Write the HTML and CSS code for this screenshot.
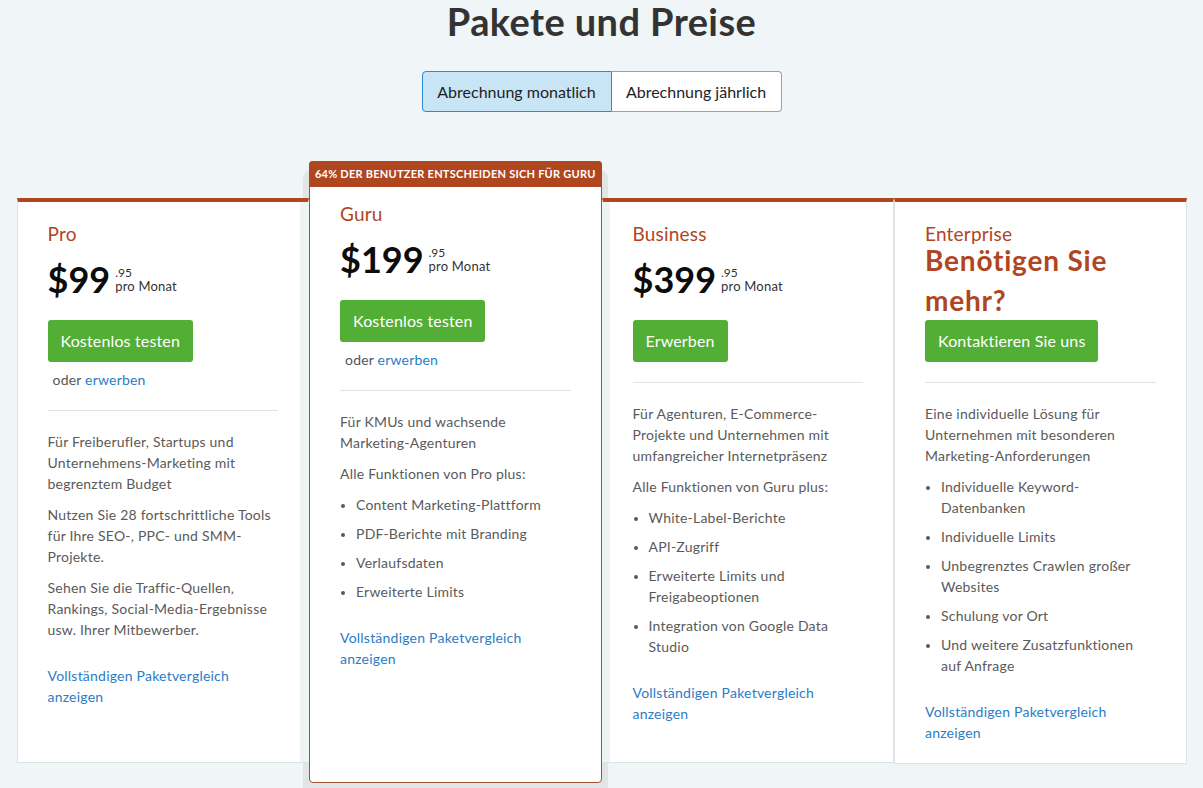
FILE: index.html
```html
<!DOCTYPE html>
<html lang="de">
<head>
<meta charset="utf-8">
<title>Pakete und Preise</title>
<link rel="stylesheet" href="styles.css">
</head>
<body>
<main class="page">
  <h1 class="page-title">Pakete und Preise</h1>
  <div class="billing">
    <button class="billing-btn is-active">Abrechnung monatlich</button>
    <button class="billing-btn">Abrechnung jährlich</button>
  </div>

  <section class="plans">
    <article class="plan plan-before">
      <h2 class="plan-name">Pro</h2>
      <div class="price"><span class="price-main">$99</span><span class="price-side"><span class="cents">.95</span><span class="period">pro Monat</span></span></div>
      <a class="cta" href="#">Kostenlos testen</a>
      <p class="alt">oder <a href="#">erwerben</a></p>
      <hr class="sep">
      <div class="desc">
        <p>Für Freiberufler, Startups und Unternehmens-Marketing mit begrenztem Budget</p>
        <p>Nutzen Sie 28 fortschrittliche Tools für Ihre SEO-, PPC- und SMM-Projekte.</p>
        <p>Sehen Sie die Traffic-Quellen, Rankings, Social-Media-Ergebnisse usw. Ihrer Mitbewerber.</p>
      </div>
      <a class="compare" href="#">Vollständigen Paketvergleich<br>anzeigen</a>
    </article>

    <article class="plan plan-featured">
      <div class="badge">64% der Benutzer entscheiden sich für Guru</div>
      <div class="plan-body">
        <h2 class="plan-name">Guru</h2>
        <div class="price"><span class="price-main">$199</span><span class="price-side"><span class="cents">.95</span><span class="period">pro Monat</span></span></div>
        <a class="cta" href="#">Kostenlos testen</a>
        <p class="alt">oder <a href="#">erwerben</a></p>
        <hr class="sep">
        <div class="desc">
          <p>Für KMUs und wachsende Marketing-Agenturen</p>
          <p>Alle Funktionen von Pro plus:</p>
          <ul>
            <li>Content Marketing-Plattform</li>
            <li>PDF-Berichte mit Branding</li>
            <li>Verlaufsdaten</li>
            <li>Erweiterte Limits</li>
          </ul>
        </div>
        <a class="compare" href="#">Vollständigen Paketvergleich<br>anzeigen</a>
      </div>
    </article>

    <article class="plan plan-after">
      <h2 class="plan-name">Business</h2>
      <div class="price"><span class="price-main">$399</span><span class="price-side"><span class="cents">.95</span><span class="period">pro Monat</span></span></div>
      <a class="cta" href="#">Erwerben</a>
      <hr class="sep">
      <div class="desc">
        <p>Für Agenturen, E-Commerce-Projekte und Unternehmen mit umfangreicher Internetpräsenz</p>
        <p>Alle Funktionen von Guru plus:</p>
        <ul>
          <li>White-Label-Berichte</li>
          <li>API-Zugriff</li>
          <li>Erweiterte Limits und Freigabeoptionen</li>
          <li>Integration von Google Data Studio</li>
        </ul>
      </div>
      <a class="compare" href="#">Vollständigen Paketvergleich<br>anzeigen</a>
    </article>

    <article class="plan">
      <h2 class="plan-name">Enterprise</h2>
      <h3 class="plan-pitch">Benötigen Sie mehr?</h3>
      <a class="cta" href="#">Kontaktieren Sie uns</a>
      <hr class="sep">
      <div class="desc">
        <p>Eine individuelle Lösung für Unternehmen mit besonderen Marketing-Anforderungen</p>
        <ul>
          <li>Individuelle Keyword-Datenbanken</li>
          <li>Individuelle Limits</li>
          <li>Unbegrenztes Crawlen großer Websites</li>
          <li>Schulung vor Ort</li>
          <li>Und weitere Zusatzfunktionen auf Anfrage</li>
        </ul>
      </div>
      <a class="compare" href="#">Vollständigen Paketvergleich<br>anzeigen</a>
    </article>
  </section>
</main>
</body>
</html>
```

FILE: styles.css
```css
* { box-sizing: border-box; }

html, body {
  margin: 0;
  padding: 0;
  background: #f0f5f8;
}

body {
  font-family: Lato, "Open Sans", "Liberation Sans", sans-serif;
  color: #333;
}

.page {
  width: 1203px;
  min-height: 788px;
  display: flex;
  flex-direction: column;
  align-items: center;
}

.page-title {
  margin: 0;
  font-size: 38px;
  line-height: 42px;
  font-weight: 700;
  letter-spacing: 0.4px;
  color: #333;
}

.billing {
  display: flex;
  margin-top: 29px;
}

.billing-btn {
  font-family: inherit;
  font-size: 16px;
  color: #1e1e1e;
  height: 41px;
  padding: 0 10px;
  background: #fff;
  border: 1px solid #7ea6d6;
  cursor: pointer;
}

.billing-btn:first-child {
  width: 190px;
  border-radius: 4px 0 0 4px;
}

.billing-btn:last-child {
  width: 170px;
  border-left: none;
  border-radius: 0 4px 4px 0;
}

.billing-btn.is-active {
  background: #c8e5f6;
  border-color: #2b8ad6;
}

.plans {
  display: grid;
  grid-template-columns: repeat(4, 1fr);
  align-items: start;
  width: 1170px;
  margin-top: 86px;
}

.plan {
  position: relative;
  z-index: 2;
  min-height: 565px;
  background: #fff;
  border: 1px solid #dde2e5;
  border-top: 4px solid #b0461f;
  padding: 19px 30px 20px;
  display: flex;
  flex-direction: column;
  align-items: flex-start;
}

.plan-before {
  border-right-color: #eef3f5;
  box-shadow: inset -8px 0 0 #eef3f5;
}

.plan-after {
  border-left-color: #eef3f5;
  box-shadow: inset 7px 0 0 #eef3f5;
}

.plan-name {
  margin: 0;
  font-size: 19px;
  line-height: 26px;
  font-weight: 400;
  letter-spacing: 0.2px;
  color: #b0461f;
}

.price {
  display: flex;
  align-items: flex-start;
  margin-top: 12px;
  color: #111;
}

.price-main {
  font-size: 36px;
  line-height: 40px;
  font-weight: 700;
  color: #0c0c0c;
}

.price-side {
  display: flex;
  flex-direction: column;
  margin-left: 5px;
  padding-top: 8px;
  color: #333;
}

.cents {
  font-size: 12px;
  line-height: 12px;
}

.period {
  font-size: 13px;
  line-height: 14px;
  letter-spacing: 0.2px;
}

.plan-pitch {
  margin: -7px 0 0;
  font-size: 28px;
  line-height: 40px;
  font-weight: 700;
  letter-spacing: 0.8px;
  color: #b0461f;
}

.cta {
  display: inline-block;
  margin-top: 21px;
  height: 42px;
  line-height: 42px;
  padding: 0 13px;
  background: #52ae34;
  color: #fff;
  font-size: 16px;
  letter-spacing: 0.15px;
  text-decoration: none;
  border-radius: 3px;
}

.plan-pitch + .cta {
  margin-top: 0;
}

.alt {
  margin: 7px 0 0 5px;
  font-size: 14px;
  line-height: 21px;
  letter-spacing: 0.2px;
  color: #555;
}

.alt a,
.compare {
  color: #2b7cc5;
  text-decoration: none;
}

.sep {
  align-self: stretch;
  margin: 20px 0 0;
  border: 0;
  border-top: 1px solid #e1e4e6;
  height: 0;
}

.desc {
  margin-top: 20px;
  font-size: 14px;
  line-height: 21px;
  letter-spacing: 0.22px;
  color: #5a5a5a;
}

.desc p {
  margin: 0;
}

.desc p + p,
.desc ul {
  margin-top: 10px;
}

.desc ul {
  margin-bottom: 0;
  padding-left: 16px;
}

.desc li + li {
  margin-top: 8px;
}

.desc li::marker {
  font-size: 12px;
}

.compare {
  display: block;
  margin-top: 25px;
  font-size: 14px;
  line-height: 21px;
  letter-spacing: 0.22px;
}

.plan-featured {
  z-index: 1;
  min-height: 622px;
  margin-top: -37px;
  padding: 0;
  border: 1px solid #a5522f;
  border-radius: 4px;
  box-shadow: 0 14px 0 6px #e2e4e6;
}

.badge {
  align-self: stretch;
  height: 26px;
  line-height: 25px;
  margin: -1px -1px 0;
  background: #b0461f;
  color: #fff;
  font-size: 11px;
  font-weight: 700;
  letter-spacing: 0.25px;
  text-transform: uppercase;
  text-align: center;
  white-space: nowrap;
  border-radius: 4px 4px 0 0;
}

.plan-body {
  align-self: stretch;
  padding: 14px 30px 20px;
  display: flex;
  flex-direction: column;
  align-items: flex-start;
}
```
